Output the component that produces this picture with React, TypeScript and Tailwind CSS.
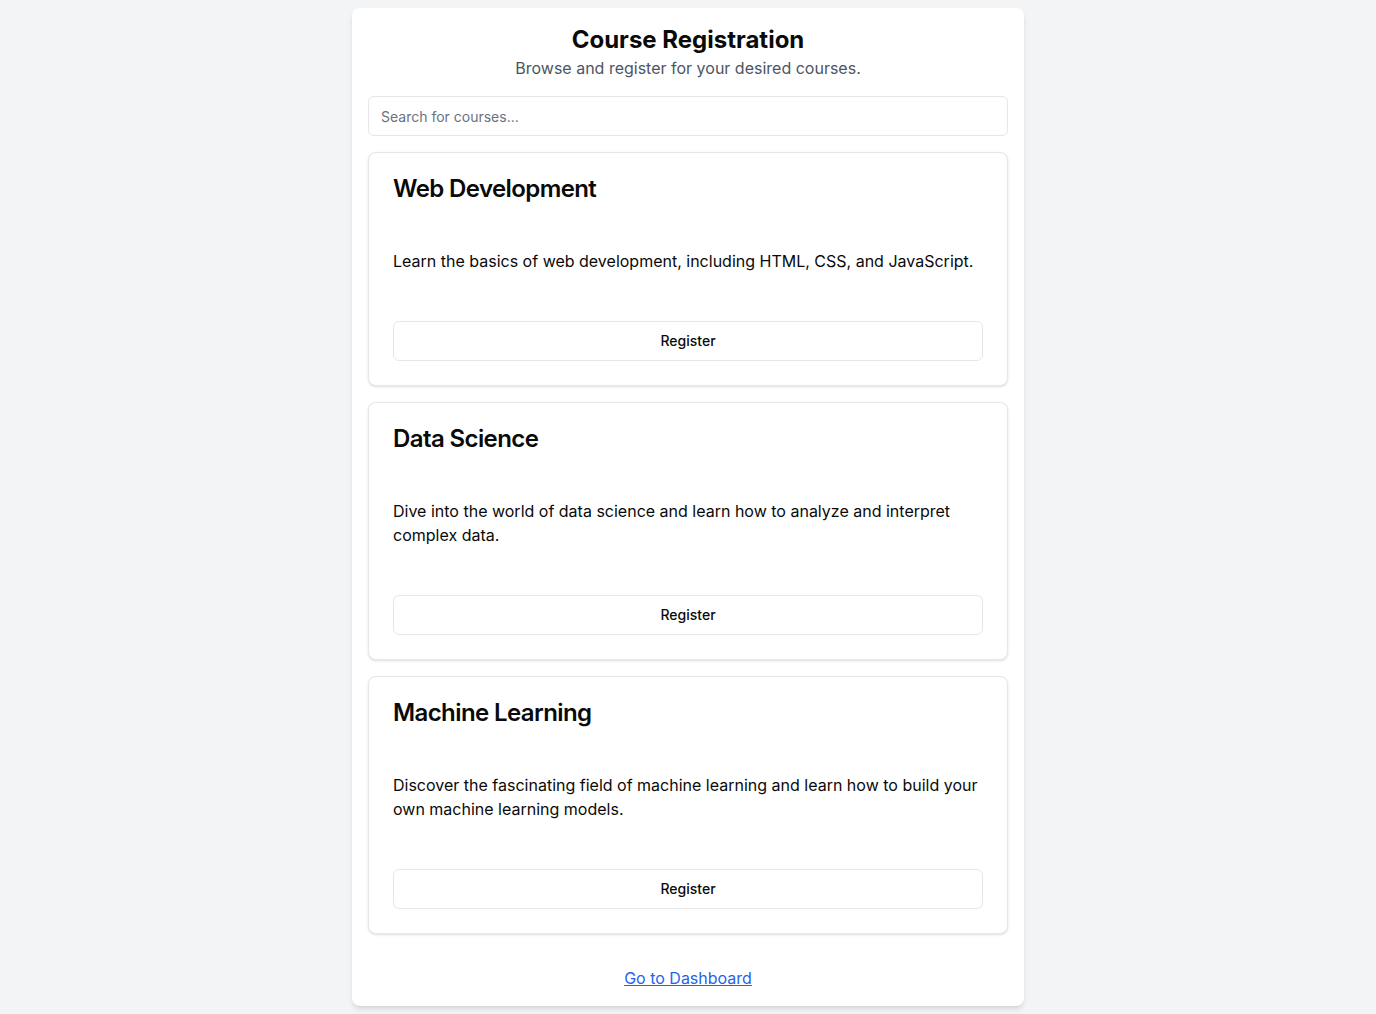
import React from "react";

const courses = [
  {
    title: "Web Development",
    description: "Learn the basics of web development, including HTML, CSS, and JavaScript.",
  },
  {
    title: "Data Science",
    description: "Dive into the world of data science and learn how to analyze and interpret complex data.",
  },
  {
    title: "Machine Learning",
    description: "Discover the fascinating field of machine learning and learn how to build your own machine learning models.",
  },
];

export default function App() {
  return (
    <div className="min-h-screen bg-[#f3f4f6] p-2 font-['Inter',sans-serif] text-[#0a0a0a]">
      <div className="mx-auto max-w-2xl rounded-lg bg-white p-4 shadow-md">
        <h1 className="text-center text-2xl font-bold">Course Registration</h1>
        <p className="mb-4 text-center text-base text-[#4b5563]">Browse and register for your desired courses.</p>
        <input
          type="text"
          placeholder="Search for courses..."
          className="mb-4 block h-10 w-full rounded-md border border-[#e5e7eb] bg-white px-3 text-sm placeholder:text-[#6b7280] outline-none"
        />
        <div className="flex flex-col gap-4">
          {courses.map((c) => (
            <div key={c.title} className="rounded-lg border border-[#e5e7eb] bg-white shadow-sm">
              <div className="p-6">
                <h3 className="text-2xl font-semibold leading-none tracking-tight">{c.title}</h3>
              </div>
              <div className="p-6">
                <p className="text-base">{c.description}</p>
              </div>
              <div className="p-6">
                <button className="h-10 w-full rounded-md border border-[#e5e7eb] bg-white text-sm font-medium">
                  Register
                </button>
              </div>
            </div>
          ))}
        </div>
        <div className="mt-8 text-center">
          <a href="#" className="text-base text-[#2563eb] underline">Go to Dashboard</a>
        </div>
      </div>
    </div>
  );
}
